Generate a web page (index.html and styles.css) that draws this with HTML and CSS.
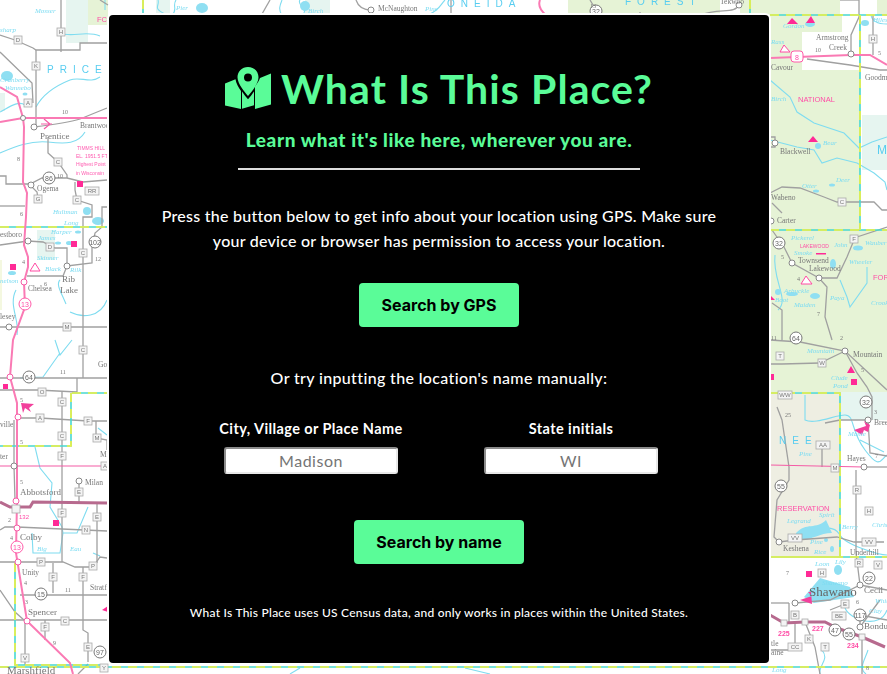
FILE: index.html
```html
<!DOCTYPE html>
<html lang="en">
<head>
<meta charset="utf-8">
<title>What Is This Place?</title>
<link rel="stylesheet" href="styles.css">
</head>
<body>
<svg class="map" viewBox="0 0 887 674" aria-hidden="true">
  <!-- land tints -->
  <path class="tint-green" d="M88 0H108V25H88Z"/>
  <path class="tint-teal" d="M66 0H88V43H66Z"/>
  <path class="tint-teal" d="M0 93H5V111H0Z"/>
  <path class="tint-teal" d="M37 230H55V260H37Z"/>
  <path class="tint-pale" d="M0 260H2V310H0Z"/>
  <path class="tint-teal" d="M156 0H170V15H156Z"/>
  <path class="tint-teal" d="M305 0H330V15H305Z"/>
  <path class="tint-green" d="M568 0H720V15H568Z"/>
  <path class="tint-green" d="M740 0H840V15H740Z"/>
  <path class="tint-green" d="M877 0H887V15H877Z"/>
  <path class="tint-green" d="M760 15H860V230H887V392H760Z"/>
  <path class="tint-white" d="M802 32H842V15H859V70H802Z"/>
  <path class="tint-teal" d="M862 115H887V170H862Z"/>
  <path class="tint-grey" d="M760 393H840V557H760Z"/>
  <path class="tint-teal" d="M840 392H887V420H840Z"/>

  <!-- rivers -->
  <g class="river">
    <path d="M36 107C44 92 60 84 70 80S90 84 100 77"/>
    <path d="M0 153C12 148 30 140 48 142S78 144 85 132"/>
    <path d="M60 33C72 38 86 30 100 36"/>
    <path d="M0 112C8 108 18 100 25 105"/>
    <path d="M105 0V10"/>
    <path d="M66 304C60 290 56 284 60 280M70 312C82 318 100 318 107 300"/>
    <path d="M16 290C8 305 20 320 17 335"/>
    <path d="M55 340L60 355L72 340M60 353L43 377L20 378"/>
    <path d="M35 447L40 468L52 483L50 507L62 527L63 533H77L88 507"/>
    <path d="M32 533L33 553H60L63 533"/>
    <path d="M93 553L100 556"/>
    <path d="M98 428L107 435"/>
    <path d="M770 80L790 97L797 112L814 123L844 133L859 148L872 142L887 137"/>
    <path d="M770 140L797 147L814 150L822 163L837 158L857 163L874 173L885 182L887 190"/>
    <path d="M840 280L847 297L850 307L867 283V267"/>
    <path d="M871 15C872 22 880 24 887 24"/>
    <path d="M805 395V420C815 425 835 415 845 415S850 430 865 450S880 460 887 455"/>
    <path d="M860 440L884 452"/>
    <path d="M803 538C815 525 835 525 840 535S880 555 887 555"/>
    <path d="M775 255C772 280 790 300 778 310"/>
    <path d="M845 608C850 620 880 630 887 610"/>
    <path d="M820 674C818 665 830 660 822 650"/>
    <path d="M868 650C865 660 858 668 866 674"/>
    <path d="M158 0C160 6 152 8 165 14"/>
    <path d="M176 0C172 6 178 10 172 15"/>
    <path d="M282 0C280 5 278 10 282 15"/>
    <path d="M300 0C296 5 310 10 302 15"/>
    <path d="M428 15C440 10 440 5 445 0"/>
    <path d="M300 668L290 674"/>
    <path d="M465 668L490 674"/>
  </g>
  <g class="lakes">
    <path d="M804 597L820 578L850 587L854 597L814 603Z"/>
    <path d="M796 533C806 522 816 530 826 520L832 533C816 533 806 545 796 537Z"/>
    <ellipse cx="7" cy="76" rx="6" ry="5"/>
    <ellipse cx="25" cy="94" rx="2.500" ry="1.500"/>
    <ellipse cx="87" cy="211" rx="4" ry="4"/>
    <ellipse cx="98" cy="221" rx="6" ry="4"/>
    <ellipse cx="78" cy="232" rx="3" ry="1.500"/>
    <ellipse cx="58" cy="243" rx="3" ry="1.500"/>
    <ellipse cx="69" cy="243" rx="3" ry="2"/>
    <ellipse cx="12" cy="273" rx="4" ry="2"/>
    <ellipse cx="810" cy="24" rx="5" ry="3"/>
    <ellipse cx="818" cy="146" rx="3" ry="3"/>
    <ellipse cx="816" cy="191" rx="3" ry="1.500"/>
    <ellipse cx="832" cy="185" rx="3" ry="1.500"/>
    <ellipse cx="858" cy="248" rx="5" ry="2.500"/>
    <ellipse cx="833" cy="264" rx="3" ry="5"/>
    <ellipse cx="792" cy="294" rx="6" ry="2"/>
    <ellipse cx="815" cy="296" rx="5" ry="3"/>
    <ellipse cx="778" cy="292" rx="3" ry="3"/>
    <ellipse cx="838" cy="570" rx="4" ry="5"/>
    <ellipse cx="865" cy="23" rx="4" ry="3"/>
    <ellipse cx="826" cy="540" rx="2" ry="2"/>
    <ellipse cx="832" cy="549" rx="2" ry="3"/>
    <ellipse cx="305" cy="6" rx="5" ry="5"/>
    <ellipse cx="202" cy="8" rx="6" ry="5"/>
  </g>

  <!-- grey roads -->
  <g class="road">
    <path d="M61 0V52"/>
    <path d="M0 35L15 40L33 48L36 50H80V43H107"/>
    <path d="M36 50V127"/>
    <path d="M0 52L32 83L33 103"/>
    <path d="M34 127C50 125 70 122 80 119L107 108"/>
    <path d="M48 137V153L58 162L67 175V178"/>
    <path d="M0 176H6V184H30L42 178H67L83 182L107 180"/>
    <path d="M75 182V190L77 200L92 205V217H83V340"/>
    <path d="M107 207H102V227L95 233L92 248V263L67 266V248H55L43 242L28 241L0 245"/>
    <path d="M0 206H25"/>
    <path d="M27 276H63L67 266"/>
    <path d="M0 327H107"/>
    <path d="M28 183L37 192L38 199"/>
    <path d="M0 390H37L77 392V378"/>
    <path d="M0 378H107"/>
    <path d="M83 340V378"/>
    <path d="M62 392V562"/>
    <path d="M18 418H40L88 421H107"/>
    <path d="M96 421V438L107 440V450"/>
    <path d="M79 481V503"/>
    <path d="M97 503V563"/>
    <path d="M0 530L5 527H17L107 531"/>
    <path d="M0 562H63L75 567H93L100 557L107 558"/>
    <path d="M53 563V593"/>
    <path d="M83 567V630L88 633V662"/>
    <path d="M20 595H107"/>
    <path d="M0 620H107"/>
    <path d="M45 620V640"/>
    <path d="M25 620V665"/>
    <path d="M0 590L15 612L24 620"/>
    <path d="M14 420V466L15 500"/>
    <path d="M88 664L78 674"/>
    <path d="M807 59L850 65L880 70H887"/>
    <path d="M851 55V35L859 17V0"/>
    <path d="M873 15V55"/>
    <path d="M770 137H775V147H770"/>
    <path d="M770 193L782 187L800 188L824 197L837 202H874L882 210H887"/>
    <path d="M772 203L782 213"/>
    <path d="M772 230L784 247L792 263L819 278L827 287L825 317L832 340"/>
    <path d="M819 278H837L847 257L854 240L857 237L887 227"/>
    <path d="M772 303L782 310V340"/>
    <path d="M770 364H782L820 363L845 351L857 373L867 387L872 397V420"/>
    <path d="M770 340L800 342L845 351L887 390"/>
    <path d="M777 407L782 420L789 467V480L777 500L774 537L779 542L795 540L837 537L854 542H884"/>
    <path d="M822 445V467"/>
    <path d="M825 423L840 420H868L870 453L887 456"/>
    <path d="M856 470V553L860 585"/>
    <path d="M864 467H887"/>
    <path d="M789 603V623"/>
    <path d="M795 603L830 600L860 585L887 590"/>
    <path d="M789 603H770"/>
    <path d="M862 637V674"/>
    <path d="M795 623V650H770M815 647L820 674M805 622L815 647"/>
    <path d="M860 627V615L887 620"/>
    <path d="M845 604L830 610M880 600L860 627"/>
    <path d="M356 0C358 6 362 10 371 10"/>
    <path d="M451 0V15"/>
    <path d="M590 0L596 10M640 15V12"/>
    <path d="M700 15C720 8 735 14 739 5"/>
    <path d="M840 0L859 0"/>
    <path d="M100 0L108 5"/>
    <path d="M270 0L262 14"/>
  </g>

  <!-- yellow and teal boundaries -->
  <g class="line-teal">
    <path d="M0 227H108M72 393H108M71 393V446H0M15 563V665H108M770 15H887M860 15V230M770 230H887M770 393H840V557H770M770 557H887M0 667H887M143 0V14M750 0V14"/>
  </g>
  <g class="line-yellow">
    <path d="M0 227H108M72 393H108M71 393V446H0M15 563V665H108M770 15H887M860 15V230M770 230H887M770 393H840V557H770M770 557H887M0 667H887M143 0V14M750 0V14"/>
  </g>

  <!-- pink highways -->
  <g class="pink">
    <path d="M0 122L23 118H108"/>
    <path d="M0 87L17 97L23 118L24 127L23 182L27 193L26 217L24 245L28 257V267L24 282L25 307L13 340L10 377L17 403V500L16 553L27 621L70 663L73 674"/>
    <path d="M770 58L851 55H870L887 65"/>
    <path d="M540 0C538 5 540 10 546 15"/>
  </g>
  <g class="pink-thin">
    <path d="M0 466H105"/>
    <path d="M770 465L864 467"/>
    <path d="M41 124H52M44 119L50 124L44 129"/>
  </g>
  <g class="toll">
    <path d="M0 502L10 507H30L33 502L107 503"/>
    <path d="M770 615L784 623L805 622H825L837 628L862 637L885 647"/>
  </g>
  <path class="plane" d="M21 403L34 404L29 408L31 412L25 408L23 413Z"/>
  <path class="plane" d="M854 430L866 426L864 421L870 425L868 432L864 430L862 435Z"/>
  <path class="plane" d="M800 600L812 596L808 592L811 592L812 604Z"/>
  <g class="pink-fill">
    <rect x="77" y="181" width="6" height="6"/><rect x="71" y="241" width="6" height="6"/><rect x="10" y="264" width="6" height="6"/>
    <rect x="3" y="384" width="5" height="5"/><rect x="53" y="520" width="6" height="6"/><rect x="806" y="571" width="6" height="6"/>
    <rect x="851" y="379" width="6" height="6"/><rect x="771" y="374" width="3" height="6"/>
    <path d="M806 23L811 16L815 23Z"/><path d="M808 142L813 136L818 142Z"/><path d="M847 373L851 366L855 373Z"/>
    <path d="M787 24L792 18L798 24Z"/><path d="M770 295L775 300H770Z"/><path d="M102 610L108 606V612Z"/>
  </g>
  <g class="pink-line"><path d="M30 271L35 263L40 271Z"/><path d="M780 52L784 45L790 52Z"/><path d="M801 284L806 276L812 284Z"/></g>
  <rect class="pink-bar" x="816" y="253" width="10" height="1.500"/>

  <!-- junctions -->
  <g class="node"><circle cx="23" cy="118" r="2.500"/><circle cx="34" cy="127" r="3"/><circle cx="31" cy="185" r="3"/><circle cx="28" cy="241" r="3"/><circle cx="67" cy="266" r="3"/><circle cx="9" cy="327" r="3"/><circle cx="14" cy="466" r="3"/><circle cx="79" cy="481" r="3"/><circle cx="851" cy="54" r="3"/><circle cx="775" cy="143" r="3"/><circle cx="771" cy="221" r="3"/><circle cx="792" cy="263" r="3"/><circle cx="819" cy="278" r="3"/><circle cx="845" cy="351" r="3"/><circle cx="868" cy="420" r="3"/><circle cx="864" cy="467" r="3"/><circle cx="779" cy="542" r="3"/><circle cx="860" cy="585" r="3"/><circle cx="795" cy="603" r="3"/><circle cx="860" cy="627" r="3"/><circle cx="371" cy="10" r="3"/><circle cx="739" cy="5" r="3"/></g>
  <g class="node-pink"><circle cx="24" cy="282" r="3"/><circle cx="10" cy="377" r="3"/><circle cx="18" cy="417" r="3"/><circle cx="16" cy="501" r="3"/><circle cx="17" cy="528" r="3"/><circle cx="18" cy="562" r="3"/><circle cx="27" cy="621" r="3"/></g>

  <!-- route shields -->
  <g class="shield">
    <g><circle cx="49" cy="178" r="6"/><text x="49" y="180.500">86</text></g>
    <g><circle cx="95" cy="242" r="6"/><text x="95" y="244.500">102</text></g>
    <g><circle cx="29" cy="377" r="6"/><text x="29" y="379.500">64</text></g>
    <g><circle cx="41" cy="594" r="6"/><text x="41" y="596.500">15</text></g>
    <g><circle cx="100" cy="652" r="6"/><text x="100" y="654.500">97</text></g>
    <g><circle cx="779" cy="243" r="6"/><text x="779" y="245.500">32</text></g>
    <g><circle cx="796" cy="338" r="6"/><text x="796" y="340.500">64</text></g>
    <g><circle cx="866" cy="402" r="6"/><text x="866" y="404.500">32</text></g>
    <g><circle cx="781" cy="486" r="6"/><text x="781" y="488.500">55</text></g>
    <g><circle cx="869" cy="578" r="6"/><text x="869" y="580.500">22</text></g>
    <g><circle cx="860" cy="615" r="6"/><text x="860" y="617.500">117</text></g>
    <g><circle cx="835" cy="630" r="6"/><text x="835" y="632.500">47</text></g>
    <g><circle cx="849" cy="634" r="6"/><text x="849" y="636.500">55</text></g>
    <g><circle cx="596" cy="11" r="6"/><text x="596" y="13.500">32</text></g>
  </g>
  <g class="shield shield-pink">
    <g><circle cx="25" cy="304" r="6"/><text x="25" y="306.500">13</text></g>
    <g><circle cx="17" cy="547" r="6"/><text x="17" y="549.500">13</text></g>
    <g><rect x="791" y="51" width="12" height="11" rx="3"/><text x="797" y="59.500">8</text></g>
  </g>

  <!-- county road letter boxes -->
  <g class="box">
    <g><rect x="57" y="28" width="8" height="8"/><text x="61" y="34">H</text></g>
    <g><rect x="14" y="36" width="8" height="8"/><text x="18" y="42">D</text></g>
    <g><rect x="32" y="62" width="8" height="8"/><text x="36" y="68">K</text></g>
    <g><rect x="24" y="99" width="8" height="8"/><text x="28" y="105">A</text></g>
    <g><rect x="54" y="158" width="8" height="8"/><text x="58" y="164">C</text></g>
    <g><rect x="85" y="187" width="14" height="8"/><text x="92" y="193">RR</text></g>
    <g><rect x="34" y="195" width="8" height="8"/><text x="38" y="201">G</text></g>
    <g><rect x="73" y="196" width="8" height="8"/><text x="77" y="202">C</text></g>
    <g><rect x="46" y="243" width="8" height="8"/><text x="50" y="249">D</text></g>
    <g><rect x="79" y="249" width="8" height="8"/><text x="83" y="255">C</text></g>
    <g><rect x="63" y="323" width="8" height="8"/><text x="67" y="329">M</text></g>
    <g><rect x="79" y="346" width="8" height="8"/><text x="83" y="352">C</text></g>
    <g><rect x="38" y="388" width="8" height="8"/><text x="42" y="394">O</text></g>
    <g><rect x="58" y="398" width="8" height="8"/><text x="62" y="404">C</text></g>
    <g><rect x="36" y="414" width="8" height="8"/><text x="40" y="420">A</text></g>
    <g><rect x="84" y="417" width="8" height="8"/><text x="88" y="423">F</text></g>
    <g><rect x="58" y="432" width="8" height="8"/><text x="62" y="438">C</text></g>
    <g><rect x="93" y="434" width="8" height="8"/><text x="97" y="440">M</text></g>
    <g><rect x="58" y="452" width="8" height="8"/><text x="62" y="458">F</text></g>
    <g><rect x="101" y="462" width="7" height="8"/><text x="105" y="468">A</text></g>
    <g><rect x="75" y="488" width="8" height="8"/><text x="79" y="494">E</text></g>
    <g><rect x="58" y="509" width="8" height="8"/><text x="62" y="515">F</text></g>
    <g><rect x="93" y="513" width="8" height="8"/><text x="97" y="519">E</text></g>
    <g><rect x="82" y="526" width="8" height="8"/><text x="86" y="532">N</text></g>
    <g><rect x="37" y="558" width="8" height="8"/><text x="41" y="564">P</text></g>
    <g><rect x="89" y="562" width="8" height="8"/><text x="93" y="568">P</text></g>
    <g><rect x="49" y="573" width="8" height="8"/><text x="53" y="579">F</text></g>
    <g><rect x="79" y="573" width="8" height="8"/><text x="83" y="579">F</text></g>
    <g><rect x="61" y="617" width="8" height="8"/><text x="65" y="623">C</text></g>
    <g><rect x="41" y="623" width="8" height="8"/><text x="45" y="629">F</text></g>
    <g><rect x="84" y="643" width="8" height="8"/><text x="88" y="649">E</text></g>
    <g><rect x="21" y="654" width="8" height="8"/><text x="25" y="660">V</text></g>
    <g><rect x="100" y="664" width="8" height="8"/><text x="104" y="670">Y</text></g>
    <g><rect x="869" y="35" width="8" height="8"/><text x="873" y="41">H</text></g>
    <g><rect x="838" y="198" width="8" height="8"/><text x="842" y="204">C</text></g>
    <g><rect x="850" y="235" width="8" height="8"/><text x="854" y="241">F</text></g>
    <g><rect x="776" y="352" width="8" height="8"/><text x="780" y="358">T</text></g>
    <g><rect x="818" y="359" width="8" height="8"/><text x="822" y="365">W</text></g>
    <g><rect x="778" y="391" width="14" height="8"/><text x="785" y="397">WW</text></g>
    <g><rect x="816" y="441" width="14" height="8"/><text x="823" y="447">AA</text></g>
    <g><rect x="831" y="464" width="8" height="8"/><text x="835" y="470">M</text></g>
    <g><rect x="853" y="486" width="8" height="8"/><text x="857" y="492">R</text></g>
    <g><rect x="865" y="507" width="8" height="8"/><text x="869" y="513">H</text></g>
    <g><rect x="788" y="534" width="14" height="8"/><text x="795" y="540">VV</text></g>
    <g><rect x="862" y="538" width="14" height="8"/><text x="869" y="544">VV</text></g>
    <g><rect x="855" y="559" width="8" height="8"/><text x="859" y="565">R</text></g>
    <g><rect x="874" y="561" width="8" height="8"/><text x="878" y="567">V</text></g>
    <g><rect x="818" y="569" width="8" height="8"/><text x="822" y="575">H</text></g>
    <g><rect x="841" y="600" width="8" height="8"/><text x="845" y="606">E</text></g>
    <g><rect x="832" y="612" width="14" height="8"/><text x="839" y="618">BE</text></g>
    <g><rect x="791" y="611" width="8" height="8"/><text x="795" y="617">B</text></g>
    <g><rect x="805" y="635" width="8" height="8"/><text x="809" y="641">K</text></g>
    <g><rect x="788" y="643" width="14" height="8"/><text x="795" y="649">CC</text></g>
    <g><rect x="821" y="643" width="8" height="8"/><text x="825" y="649">T</text></g>
  </g>
  <g class="box-plain"><rect x="12" y="505" width="8" height="8"/><rect x="781" y="620" width="6" height="6"/><rect x="802" y="619" width="6" height="6"/><rect x="859" y="634" width="6" height="6"/></g>

  <!-- place labels -->
  <g class="label">
    <text x="40" y="139">Prentice</text><text x="37" y="191" class="sm">Ogema</text><text x="80" y="128" class="sm">Brantwood</text><text x="28" y="291" class="sm">Chelsea</text><text x="62" y="282">Rib</text><text x="60" y="293">Lake</text><text x="0" y="237" class="sm">estboro</text><text x="0" y="319" class="sm">lesey</text>
    <text x="20" y="495">Abbotsford</text><text x="20" y="540">Colby</text><text x="22" y="575" class="sm">Unity</text><text x="28" y="615">Spencer</text><text x="85" y="485" class="sm">Milan</text><text x="90" y="590" class="sm">Stratf</text><text x="98" y="367" class="sm">Go</text><text x="0" y="427" class="sm">ville</text><text x="0" y="459" class="sm">ter</text><text x="100" y="457" class="sm">M</text><text x="7" y="674" class="lg">Marshfield</text>
    <text x="816" y="40" class="sm">Armstrong</text><text x="829" y="50" class="sm">Creek</text><text x="771" y="70" class="sm">Cavour</text><text x="865" y="80" class="sm">Goodman</text><text x="780" y="154" class="sm">Blackwell</text><text x="771" y="200" class="sm">Wabeno</text><text x="777" y="223" class="sm">Carter</text><text x="798" y="263" class="sm">Townsend</text><text x="809" y="271" class="sm">Lakewood</text>
    <text x="853" y="357" class="sm">Mountain</text><text x="874" y="425" class="sm">Breen</text><text x="847" y="461" class="sm">Hayes</text><text x="783" y="551" class="sm">Keshena</text><text x="850" y="555" class="sm">Underhill</text><text x="809" y="596" class="big">Shawano</text><text x="864" y="593">Cecil</text><text x="864" y="629">Bonduel</text><text x="771" y="646" class="sm">tle</text><text x="771" y="655" class="sm">aine</text>
    <text x="378" y="11" class="sm">McNaughton</text><text x="720" y="4" class="sm">Tekwoo</text>
  </g>
  <g class="num"><text x="62" y="114">10</text><text x="57" y="178">10</text><text x="17" y="161">8</text><text x="20" y="216">6</text><text x="95" y="261">12</text><text x="22" y="264">4</text><text x="44" y="286">6</text><text x="60" y="374">11</text><text x="20" y="402">5</text><text x="20" y="444">5</text><text x="20" y="484">5</text><text x="8" y="522">2</text><text x="10" y="540">4</text><text x="24" y="585">4</text><text x="25" y="604">3</text><text x="65" y="592">11</text><text x="53" y="645">9</text><text x="815" y="52">10</text><text x="878" y="55">5</text><text x="781" y="259">5</text><text x="797" y="281">4</text><text x="817" y="316">7</text><text x="840" y="340">2</text><text x="771" y="340">11</text><text x="861" y="372">5</text><text x="785" y="417">25</text><text x="874" y="414">3</text><text x="875" y="458">7</text><text x="786" y="575">7</text><text x="856" y="604">6</text><text x="866" y="670">8</text><text x="590" y="8">13</text></g>
  <g class="blue-label">
    <text x="35" y="13">Mosser</text><text x="0" y="32">sharp</text><text x="0" y="82">Cranberry</text><text x="5" y="90">Wannebo</text><text x="53" y="214">Hultman</text><text x="64" y="225">Long</text><text x="51" y="234">Harper</text><text x="38" y="240">James</text><text x="37" y="260">Skinner</text><text x="45" y="271">Black</text><text x="0" y="283">nelson</text><text x="70" y="272">Rilk</text><text x="37" y="551">Big</text><text x="70" y="551">Eau</text>
    <text x="783" y="28">Gordon</text><text x="771" y="44">Rass</text><text x="771" y="101">Birch</text><text x="823" y="145">Bear</text><text x="802" y="188">Otter</text><text x="836" y="182">Deer</text><text x="791" y="240">Pickerel</text><text x="794" y="255">Smoke</text><text x="834" y="247">John</text><text x="849" y="264">Wheeler</text><text x="865" y="245">Wauber</text><text x="784" y="293">Arbuckle</text><text x="775" y="302">Boot</text><text x="794" y="307">Maiden</text><text x="830" y="300">Paya</text><text x="871" y="305">Crook</text><text x="807" y="353">Mountain</text><text x="831" y="380">Clude</text><text x="833" y="388">Pond</text><text x="799" y="456">Pine</text><text x="787" y="523">Legrand</text><text x="819" y="517">Spirit</text><text x="842" y="529">Berry</text><text x="810" y="544">Pine</text><text x="814" y="554">Rice</text><text x="815" y="566">Loon</text><text x="835" y="564">Lily</text><text x="822" y="585">Shawano</text><text x="875" y="603">White</text><text x="869" y="613">Clay</text><text x="872" y="527">Chris</text><text x="848" y="436">Mante</text><text x="772" y="672">Long</text><text x="176" y="10">Pier</text><text x="308" y="13">Birch</text><text x="425" y="11">Pine</text><text x="873" y="22">Hiles</text>
  </g>
  <g class="county">
    <text x="47" y="73">PRICE</text>
    <text x="779" y="444">NEE</text>
    <text x="447" y="7">ONEIDA</text>
    <text x="625" y="5">FOREST</text>
    <text x="877" y="154" class="wide">M</text>
  </g>
  <g class="pink-label"><text x="97" y="22">FC</text><text x="798" y="102">NATIONAL</text><text x="777" y="511">RESERVATION</text><text x="873" y="280">FOR</text><text x="800" y="248" class="tiny">LAKEWOOD</text><text x="19" y="519" class="tiny2">132</text></g>
  <g class="pink-small"><text x="77" y="150">TIMMS HILL</text><text x="76" y="158">EL. 1951.5 FT</text><text x="76" y="166">Highest Point</text><text x="76" y="175">in Wisconsin</text></g>
  <g class="pink-num"><text x="778" y="636">225</text><text x="812" y="631">227</text><text x="847" y="648">234</text></g>
</svg>

<main class="card">
  <h1 class="title">
    <svg class="title-icon" viewBox="0 0 46 42" aria-hidden="true">
      <path d="M23 0C17 0 12.500 4.500 12.500 10.300C12.500 17 20 25.500 23 29C26 25.500 33.500 17 33.500 10.300C33.500 4.500 29 0 23 0ZM23 14.400A4 4 0 1 1 23 6.400A4 4 0 0 1 23 14.400Z"/>
      <path d="M0 16.500L10.500 12.300C11 16 13.500 20.500 16 24V42L0 38.500Z"/>
      <path d="M17 24.500C19 27.500 21 30 23 32.300C25 30 27 27.500 29 24.500V38.300L17 41.800Z"/>
      <path d="M30 42V19.500C32 16.500 34.200 13.800 35 11L46 6.500V37.500Z"/>
    </svg>
    <span>What Is This Place?</span>
  </h1>
  <h2 class="tagline">Learn what it's like here, wherever you are.</h2>
  <hr class="rule">
  <p class="intro">Press the button below to get info about your location using GPS. Make sure your device or browser has permission to access your location.</p>
  <button class="btn btn-gps" type="button">Search by GPS</button>
  <p class="or">Or try inputting the location's name manually:</p>
  <form class="fields">
    <label class="field">
      <span class="field-name">City, Village or Place Name</span>
      <input class="input" type="text" placeholder="Madison">
    </label>
    <label class="field">
      <span class="field-name">State initials</span>
      <input class="input" type="text" placeholder="WI">
    </label>
  </form>
  <button class="btn btn-name" type="button">Search by name</button>
  <p class="note">What Is This Place uses US Census data, and only works in places within the United States.</p>
</main>
</body>
</html>
```

FILE: styles.css
```css
* { box-sizing: border-box; }
html, body { margin: 0; height: 100%; overflow: hidden; }
body {
  background: #fff;
  font-family: "Lato", "Liberation Sans", sans-serif;
  padding: 15px 0 0 109px;
  position: relative;
}

/* map backdrop */
.map { position: absolute; inset: 0; width: 887px; height: 674px; filter: blur(0.4px); }
.map path { fill: none; }
.map .tint-green { fill: #e6f3d6; }
.map .tint-teal { fill: #e6f5f0; }
.map .tint-grey { fill: #eeeee2; }
.map .tint-white { fill: #fff; }
.map .tint-pale { fill: #f4f8e0; }
.map .river path { stroke: #7fdcf0; stroke-width: 1.1; }
.map .lakes path, .map .lakes ellipse { fill: #8fdff2; }
.map .road path { stroke: #a0a0a0; stroke-width: 1.3; }
.map .line-teal path { stroke: #48d8d0; stroke-width: 1.6; }
.map .line-yellow path { stroke: #f6f23c; stroke-width: 1.6; stroke-dasharray: 9 7; }
.map .pink path { stroke: #fa7ab4; stroke-width: 2; }
.map .pink-thin path { stroke: #f45ca6; stroke-width: 1.2; }
.map .toll path { stroke: #b76a8e; stroke-width: 3; }
.map .plane { fill: #f2409c; }
.map .pink-fill rect, .map .pink-fill path, .map .pink-bar { fill: #ff2a96; }
.map .pink-line path { stroke: #ff4aa3; stroke-width: 1; fill: #fff; }
.map .node circle { fill: #fff; stroke: #888; stroke-width: 1; }
.map .node-pink circle { fill: #fff; stroke: #f45ca6; stroke-width: 1; }
.map text { font-family: "Liberation Serif", serif; }
.map .shield circle { fill: #fff; stroke: #777; stroke-width: 1; }
.map .shield text { font-size: 7px; fill: #666; text-anchor: middle; font-family: "Liberation Sans", sans-serif; }
.map .shield-pink circle, .map .shield-pink rect { fill: #fff; stroke: #ff5aa8; stroke-width: 1; }
.map .shield-pink text { fill: #ff4da6; }
.map .box rect, .map .box-plain rect { fill: #f4f4f4; stroke: #aaa; stroke-width: 0.8; }
.map .box text { font-size: 6px; fill: #777; text-anchor: middle; font-family: "Liberation Sans", sans-serif; }
.map .label text { font-size: 9px; fill: #777; }
.map .label .sm { font-size: 7.500px; }
.map .label .big { font-size: 13px; fill: #666; }
.map .label .lg { font-size: 11px; }
.map .num text { font-size: 6px; fill: #777; }
.map .blue-label text { font-size: 7px; fill: #7cdcf2; font-style: italic; }
.map .county text { font-family: "Liberation Sans", sans-serif; font-size: 10px; fill: #58cdf0; letter-spacing: 6px; }
.map .county .wide { letter-spacing: 0; font-size: 12px; }
.map .pink-label text { font-size: 7.500px; fill: #ff4da6; font-family: "Liberation Sans", sans-serif; }
.map .pink-label .tiny { font-size: 5px; }
.map .pink-label .tiny2 { font-size: 6px; }
.map .pink-small text { font-size: 5px; fill: #ff5cb0; font-family: "Liberation Sans", sans-serif; }
.map .pink-num text { font-size: 7px; fill: #ff4da6; font-family: "Liberation Sans", sans-serif; font-weight: bold; }

/* card */
.card {
  position: relative;
  width: 660px;
  height: 648px;
  background: #000;
  color: #fff;
  border-radius: 4px;
  box-shadow: 0 0 0 2px #fff;
  display: flex;
  flex-direction: column;
  align-items: center;
  text-align: center;
  padding-top: 49px;
}
.title {
  display: flex;
  align-items: center;
  gap: 10px;
  margin: 0;
  height: 48px;
  color: #5afc98;
  font-size: 41px;
  font-weight: 700;
  letter-spacing: 1.1px;
  white-space: nowrap;
}
.title-icon { width: 46px; height: 42px; fill: #5afc98; flex: none; }
.tagline {
  margin: 16px 0 0;
  color: #5afc98;
  font-size: 19px;
  line-height: 24px;
  font-weight: 900;
  letter-spacing: 0.6px;
}
.rule { width: 402px; height: 2px; margin: 16px 0 0; border: 0; background: #ddd; }
.intro { width: 580px; margin: 33px 0 0; font-size: 16px; line-height: 25px; font-weight: 500; letter-spacing: 0.25px; }
.btn {
  border: 0;
  border-radius: 4px;
  background: #5afc98;
  color: #000;
  font-family: "Inter", "Liberation Sans", sans-serif;
  font-size: 16px;
  font-weight: 700;
  height: 44px;
  padding: 0;
}
.btn-gps { width: 160px; margin-top: 30px; }
.or { margin: 41px 0 0; font-size: 16px; line-height: 20px; font-weight: 500; letter-spacing: 0.35px; }
.fields { display: flex; gap: 86px; margin: 31px 0 0 4px; }
.field { display: flex; flex-direction: column; align-items: center; width: 174px; }
.field-name { font-size: 14.500px; line-height: 20px; font-weight: 700; white-space: nowrap; letter-spacing: 0.4px; }
.input {
  width: 174px;
  height: 27px;
  margin-top: 8px;
  border: 2px solid;
  border-color: #8c8c8c #e8e8e8 #e8e8e8 #8c8c8c;
  border-radius: 3px;
  background: #fff;
  text-align: center;
  font-family: "Lato", "Liberation Sans", sans-serif;
  font-size: 16px;
  letter-spacing: 0.5px;
  padding: 0;
}
.input::placeholder { color: #757575; opacity: 1; }
.btn-name { width: 170px; margin-top: 46px; }
.note { margin: 42px 0 0; font-size: 12px; line-height: 14px; font-weight: 500; letter-spacing: 0.25px; }
```
